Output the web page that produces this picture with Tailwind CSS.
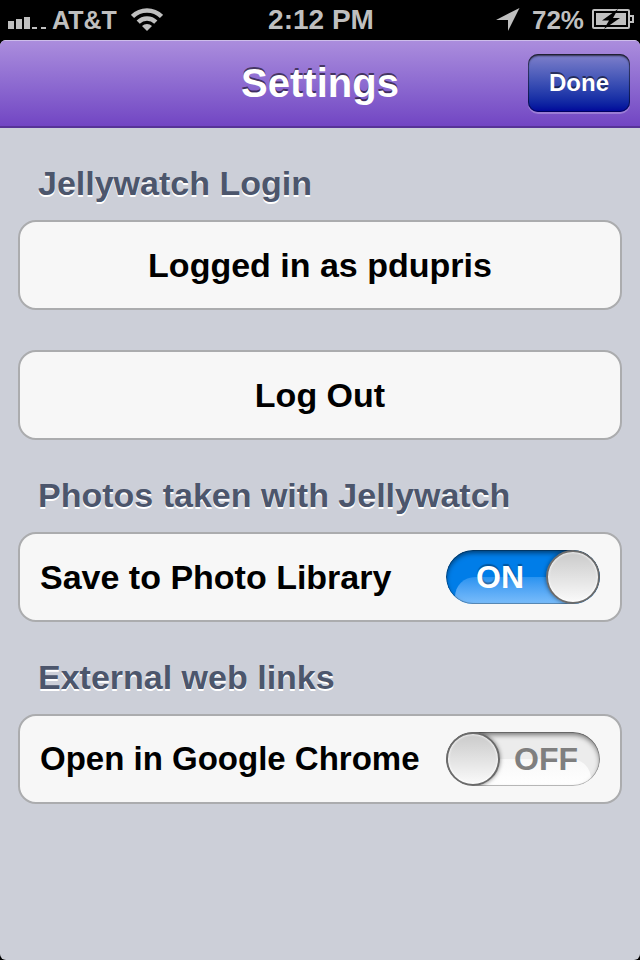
<!DOCTYPE html>
<html lang="en">
<head>
<meta charset="utf-8">
<meta name="viewport" content="width=device-width, initial-scale=1">
<title>Settings</title>
<script src="https://cdn.jsdelivr.net/npm/@tailwindcss/browser@4"></script>
</head>
<body class="bg-black font-['Liberation_Sans',Arial,sans-serif] font-bold">
<div class="flex min-h-screen flex-col">
  <div class="grid h-10 grid-cols-[1fr_auto_1fr] items-center pl-2 pr-[6px] text-[#bfbfbf]">
    <div class="flex items-center gap-[6px]">
      <svg class="h-5 w-[38px]" viewBox="0 0 38 20" fill="currentColor" aria-label="Signal strength">
        <path d="M0 11h6v8H0zM8 9h6v10H8zM16 7h6v12h-6zM24 17h5v2h-5zM33 17h5v2h-5z"/>
      </svg>
      <span class="text-[25px] leading-8">AT&amp;T</span>
      <svg class="ml-2 h-6 w-8" viewBox="0 0 32 24" aria-label="Wi-Fi">
        <g fill="none" stroke="currentColor" stroke-width="4.500">
          <path d="M1.500 8.500A20.500 20.500 0 0 1 30.500 8.500"/>
          <path d="M7.200 14.200A12.500 12.500 0 0 1 24.800 14.200"/>
        </g>
        <path d="M16 23l-5-5a7 7 0 0 1 10 0z" fill="currentColor"/>
      </svg>
    </div>
    <span class="text-[28px] leading-8">2:12 PM</span>
    <div class="flex items-center justify-end gap-2">
      <svg class="mr-1 h-6 w-6" viewBox="0 0 24 24" fill="currentColor" aria-label="Location"><path d="M23.500 0L12 23V12L0 12z"/></svg>
      <span class="text-[26px] leading-8">72%</span>
      <svg class="h-5 w-[42px] overflow-visible" viewBox="0 0 42 20" aria-label="Battery charging">
        <rect x="1" y="0" width="36" height="18" rx="1" fill="none" stroke="currentColor" stroke-width="2"/>
        <path d="M4 3h30v12H4z" fill="currentColor"/>
        <path d="M38 6h3v6h-3" fill="none" stroke="currentColor" stroke-width="2"/>
        <path d="M26-1L10 10.500h7L12 19L28 8h-7z" fill="#000"/>
      </svg>
    </div>
  </div>

  <div class="flex grow flex-col overflow-hidden rounded-t-[6px] rounded-b-[6px] bg-[#cccfd8]">
    <header class="grid h-[88px] grid-cols-[1fr_auto_1fr] items-center border-t border-b-2 border-t-[#cdbdea] border-b-[#573397] bg-linear-to-b from-[#ab8ddd] to-[#7245c3] px-[10px] pb-[2px]">
      <h1 class="col-start-2 text-[40px] leading-[48px] text-white [text-shadow:0_-2px_0_#0000008c]">Settings</h1>
      <button type="button" class="h-[58px] w-[102px] justify-self-end rounded-[10px] bg-linear-to-b from-[#8080cb] to-[#03009a] text-2xl text-white shadow-[0_2px_0_#ffffff40,inset_0_2px_2px_#000000a0,inset_0_0_0_1px_#00000060] [text-shadow:0_-2px_0_#00000080]">Done</button>
    </header>

    <main class="px-[18px] pt-[35px] text-[34px] leading-10 text-black">
      <section>
        <h2 class="mb-[17px] px-5 text-[#4c566c] [text-shadow:0_2px_0_#fff]">Jellywatch Login</h2>
        <p class="flex h-[90px] items-center justify-center rounded-[18px] border-2 border-[#abacae] bg-[#f7f7f7]">Logged in as pdupris</p>
        <button type="button" class="mt-10 block h-[90px] w-full rounded-[18px] border-2 border-[#abacae] bg-[#f7f7f7]">Log Out</button>
      </section>

      <section class="mt-[35px]">
        <h2 class="mb-[17px] px-5 text-[#4c566c] [text-shadow:0_2px_0_#fff]">Photos taken with Jellywatch</h2>
        <label class="flex h-[90px] items-center justify-between rounded-[18px] border-2 border-[#abacae] bg-[#f7f7f7] px-5">
          <span>Save to Photo Library</span>
          <span class="relative h-[54px] w-[154px] shrink-0 overflow-hidden rounded-full">
            <input type="checkbox" checked class="peer absolute inset-0 size-full appearance-none rounded-full">
            <span aria-hidden="true" class="pointer-events-none absolute inset-0 hidden items-center rounded-full bg-[#007de8] pl-[30px] text-[32px] text-white peer-checked:flex">
              <span class="absolute top-[27px] right-0 -bottom-4 left-[9px] rounded-[20px] bg-linear-to-b from-[#2893f0] to-[#7cbefb] to-65%"></span>
              <span class="relative [text-shadow:0_-2px_1px_#00000050]">ON</span>
            </span>
            <span aria-hidden="true" class="pointer-events-none absolute inset-0 flex items-center justify-end rounded-full bg-[#ececec] pr-[22px] text-[32px] text-[#7f7f7f] peer-checked:hidden">
              <span class="absolute top-[27px] right-[9px] -bottom-4 left-0 rounded-[20px] bg-linear-to-b from-[#f8f8f8] to-white to-65%"></span>
              <span class="relative">OFF</span>
            </span>
            <span class="pointer-events-none absolute inset-0 rounded-full shadow-[inset_0_3px_5px_#00000080,inset_0_0_0_1px_#00000040]"></span>
            <span class="pointer-events-none absolute top-0 left-0 size-[54px] rounded-full border-2 border-[#6b6b6b] bg-linear-to-b from-[#cacaca] to-[#fafafa] shadow-[0_0_4px_#00000080,inset_0_0_2px_1px_#ffffffb0] peer-checked:left-[100px]"></span>
          </span>
        </label>
      </section>

      <section class="mt-[35px]">
        <h2 class="mb-[17px] px-5 text-[#4c566c] [text-shadow:0_2px_0_#fff]">External web links</h2>
        <label class="flex h-[90px] items-center justify-between rounded-[18px] border-2 border-[#abacae] bg-[#f7f7f7] px-5">
          <span class="text-[33px]">Open in Google Chrome</span>
          <span class="relative h-[54px] w-[154px] shrink-0 overflow-hidden rounded-full">
            <input type="checkbox" class="peer absolute inset-0 size-full appearance-none rounded-full">
            <span aria-hidden="true" class="pointer-events-none absolute inset-0 hidden items-center rounded-full bg-[#007de8] pl-[30px] text-[32px] text-white peer-checked:flex">
              <span class="absolute top-[27px] right-0 -bottom-4 left-[9px] rounded-[20px] bg-linear-to-b from-[#2893f0] to-[#7cbefb] to-65%"></span>
              <span class="relative [text-shadow:0_-2px_1px_#00000050]">ON</span>
            </span>
            <span aria-hidden="true" class="pointer-events-none absolute inset-0 flex items-center justify-end rounded-full bg-[#ececec] pr-[22px] text-[32px] text-[#7f7f7f] peer-checked:hidden">
              <span class="absolute top-[27px] right-[9px] -bottom-4 left-0 rounded-[20px] bg-linear-to-b from-[#f8f8f8] to-white to-65%"></span>
              <span class="relative">OFF</span>
            </span>
            <span class="pointer-events-none absolute inset-0 rounded-full shadow-[inset_0_3px_5px_#00000080,inset_0_0_0_1px_#00000040]"></span>
            <span class="pointer-events-none absolute top-0 left-0 size-[54px] rounded-full border-2 border-[#6b6b6b] bg-linear-to-b from-[#cacaca] to-[#fafafa] shadow-[0_0_4px_#00000080,inset_0_0_2px_1px_#ffffffb0] peer-checked:left-[100px]"></span>
          </span>
        </label>
      </section>
    </main>
  </div>
</div>
</body>
</html>
